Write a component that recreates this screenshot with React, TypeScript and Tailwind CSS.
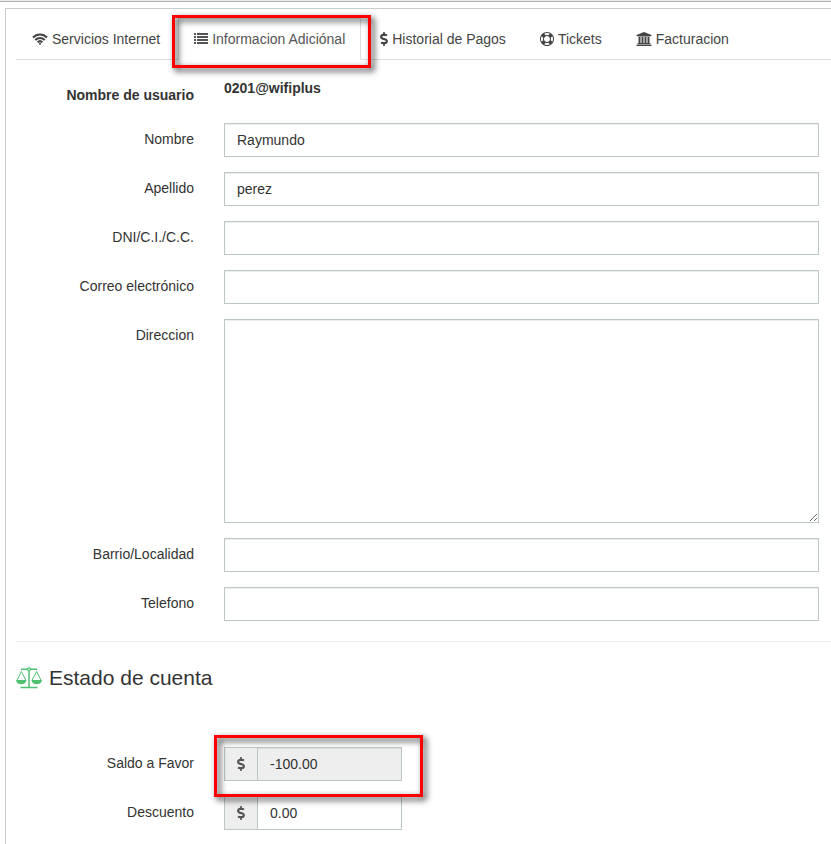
import React from 'react'
import { FaDollarSign } from 'react-icons/fa'
import clsx from 'clsx'

const WifiIcon = () => (
  <svg width="16" height="14" viewBox="0 0 16 14" fill="none" stroke="currentColor" aria-hidden="true">
    <path d="M1 5.6C5 1.5 11 1.5 15 5.6" strokeWidth="2.1" />
    <path d="M3.3 8C6 5.3 10 5.3 12.7 8" strokeWidth="2.1" />
    <path d="M5.6 10.3c1.4-1.4 3.4-1.4 4.8 0" strokeWidth="2" />
    <path d="M8 10.6l1.3 1.1L8 13l-1.3-1.3z" fill="currentColor" stroke="none" />
  </svg>
)

const ListIcon = () => (
  <svg width="14" height="14" viewBox="0 0 14 14" fill="currentColor" shapeRendering="crispEdges" aria-hidden="true">
    {[1, 4, 7, 10].map((y) => (
      <g key={y}>
        <rect x="0" y={y} width="2" height="2" />
        <rect x="3" y={y} width="11" height="2" />
      </g>
    ))}
  </svg>
)

const LifeRingIcon = () => (
  <svg width="14" height="14" viewBox="0 0 1792 1792" fill="currentColor" aria-hidden="true">
    <path d="M896 0q182 0 348 71t286 191 191 286 71 348-71 348-191 286-286 191-348 71-348-71-286-191-191-286-71-348 71-348 191-286 286-191 348-71zm0 128q-190 0-361 90l194 194q82-28 167-28t167 28l194-194q-171-90-361-90zm-678 1129l194-194q-28-82-28-167t28-167l-194-194q-90 171-90 361t90 361zm678 407q190 0 361-90l-194-194q-82 28-167 28t-167-28l-194 194q171 90 361 90zm0-384q159 0 271.5-112.5t112.5-271.5-112.5-271.5-271.5-112.5-271.5 112.5-112.5 271.5 112.5 271.5 271.5 112.5zm484-217l194 194q90-171 90-361t-90-361l-194 194q28 82 28 167t-28 167z" />
  </svg>
)

const BankIcon = () => (
  <svg width="16" height="14" viewBox="0 0 1920 1792" fill="currentColor" aria-hidden="true">
    <path d="M960 0l960 384v128h-128q0 26-20.5 45t-48.5 19h-1526q-28 0-48.5-19t-20.5-45h-128v-128zm-704 640h256v768h128v-768h256v768h128v-768h256v768h128v-768h256v768h59q28 0 48.5 19t20.5 45v64h-1664v-64q0-26 20.5-45t48.5-19h59v-768zm1595 960q28 0 48.5 19t20.5 45v128h-1920v-128q0-26 20.5-45t48.5-19h1782z" />
  </svg>
)

const BalanceIcon = () => (
  <svg width="26" height="22" viewBox="0 0 26 22" fill="none" stroke="#4fc170" aria-hidden="true">
    <path d="M5 2.300h16M13 3.500V20M4.500 20.500h17" strokeWidth="1.500" />
    <circle cx="13" cy="2.300" r="1.500" fill="white" strokeWidth="1.300" />
    <path d="M1 13.300L5.300 4.500l4.700 8.800M16 13.300l4.700-8.800 4.300 8.800" strokeWidth="1" />
    <path d="M0 13h10.500c-.2 2.800-2.500 4.200-5.200 4.200S.2 15.800 0 13zM15.500 13H26c-.2 2.800-2.500 4.200-5.300 4.200s-5-1.400-5.200-4.200z" fill="#4fc170" stroke="none" />
  </svg>
)

const tabs: { label: string; icon: React.ReactNode; active?: boolean }[] = [
  { label: 'Servicios Internet', icon: <WifiIcon /> },
  { label: 'Informacion Adiciónal', icon: <ListIcon />, active: true },
  { label: 'Historial de Pagos', icon: <FaDollarSign size={14} className="-mr-[3px] -ml-0.5" /> },
  { label: 'Tickets', icon: <LifeRingIcon /> },
  { label: 'Facturacion', icon: <BankIcon /> },
]

const controlClass =
  'block w-full border border-[#bdc7c7] px-3 text-sm leading-5 text-[#333] shadow-[inset_0_1px_1px_rgba(0,0,0,0.075)] outline-none'

// red frame around the parts the guide talks about
const Highlight: React.FC<{ className: string }> = ({ className }) => (
  <span
    className={clsx(
      'pointer-events-none absolute z-10 border-3 border-[#fe0000] drop-shadow-[3px_3px_3px_rgba(0,0,0,0.85)]',
      className
    )}
  />
)

const Row: React.FC<{ id: string; label: string; children: React.ReactNode }> = ({ id, label, children }) => (
  <div className="mb-[15px] flex gap-[30px]">
    <label htmlFor={id} className="w-[178px] shrink-0 pt-1.5 text-right leading-5">
      {label}
    </label>
    <div className="min-w-0 flex-1">{children}</div>
  </div>
)

const TextField: React.FC<{ id: string; label: string; value?: string }> = ({ id, label, value }) => (
  <Row id={id} label={label}>
    <input id={id} type="text" defaultValue={value} className={clsx(controlClass, 'h-[34px] bg-white')} />
  </Row>
)

const MoneyField: React.FC<{ id: string; label: string; value: string; readOnly?: boolean; highlighted?: boolean }> = ({
  id,
  label,
  value,
  readOnly,
  highlighted,
}) => (
  <Row id={id} label={label}>
    <div className="relative flex h-[34px] w-[178px]">
      <span className="flex w-[33px] shrink-0 items-center justify-center border border-r-0 border-[#bdc7c7] bg-[#eee] text-[#555]">
        <FaDollarSign size={14} />
      </span>
      <input
        id={id}
        type="text"
        defaultValue={value}
        readOnly={readOnly}
        className={clsx(controlClass, 'min-w-0', readOnly ? 'bg-[#eee]' : 'bg-white')}
      />
      {highlighted && <Highlight className="-top-3 -right-[21px] -bottom-4 -left-2.5" />}
    </div>
  </Row>
)

const App: React.FC = () => {
  return (
    <div className="flex min-h-screen flex-col bg-white pl-[5px] font-['Liberation_Sans',Arial,sans-serif] text-sm leading-5 text-[#333]">
      <div className="-ml-[5px] h-0.5 border-b border-[#b0b0b0] bg-[#eee]" />

      <main className="mt-1.5 flex-1 border-t border-l border-[#ccc] pt-[9px] pl-2.5">
        <nav>
          <ul className="flex border-b border-[#ddd]">
            {tabs.map((tab) => (
              <li key={tab.label} className="relative -mb-px mr-0.5">
                <a
                  href="#"
                  className={clsx(
                    'flex items-center gap-1 border px-[15px] py-2.5 whitespace-nowrap',
                    tab.active ? 'border-[#ddd] border-b-white bg-white text-[#555]' : 'border-transparent text-[#444]'
                  )}
                >
                  {tab.icon}
                  {tab.label}
                </a>
                {tab.active && <Highlight className="-top-[3px] -right-2.5 -bottom-2 -left-1.5" />}
              </li>
            ))}
          </ul>
        </nav>

        <form className="pt-[18px]">
          <div className="pr-3">
            <dl className="mb-[15px] flex min-h-[30px] gap-[30px] font-bold">
              <dt className="w-[178px] shrink-0 pt-[7px] text-right">Nombre de usuario</dt>
              <dd>0201@wifiplus</dd>
            </dl>
            <TextField id="nombre" label="Nombre" value="Raymundo" />
            <TextField id="apellido" label="Apellido" value="perez" />
            <TextField id="dni" label="DNI/C.I./C.C." />
            <TextField id="correo" label="Correo electrónico" />
            <Row id="direccion" label="Direccion">
              <textarea id="direccion" rows={10} className={clsx(controlClass, 'h-[204px] resize bg-white py-1.5')} />
            </Row>
            <TextField id="barrio" label="Barrio/Localidad" />
            <TextField id="telefono" label="Telefono" />
          </div>

          <hr className="mt-5 border-[#eee]" />

          <h2 className="mt-6 mb-[57px] flex items-center gap-[7px] text-[21px] leading-6">
            <BalanceIcon />
            Estado de cuenta
          </h2>

          <div className="pr-3">
            <MoneyField id="saldo" label="Saldo a Favor" value="-100.00" readOnly highlighted />
            <MoneyField id="descuento" label="Descuento" value="0.00" />
          </div>
        </form>
      </main>
    </div>
  )
}

export default App
